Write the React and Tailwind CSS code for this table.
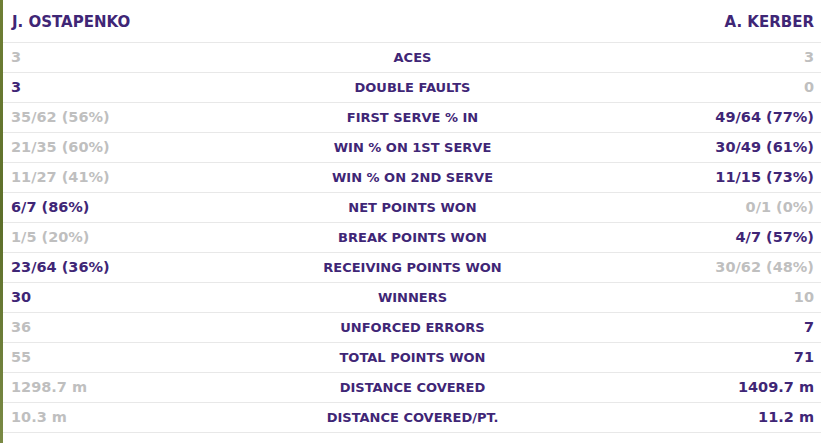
import React from "react";

const rows = [
  ["3", "ACES", "3", false, false],
  ["3", "DOUBLE FAULTS", "0", true, false],
  ["35/62 (56%)", "FIRST SERVE % IN", "49/64 (77%)", false, true],
  ["21/35 (60%)", "WIN % ON 1ST SERVE", "30/49 (61%)", false, true],
  ["11/27 (41%)", "WIN % ON 2ND SERVE", "11/15 (73%)", false, true],
  ["6/7 (86%)", "NET POINTS WON", "0/1 (0%)", true, false],
  ["1/5 (20%)", "BREAK POINTS WON", "4/7 (57%)", false, true],
  ["23/64 (36%)", "RECEIVING POINTS WON", "30/62 (48%)", true, false],
  ["30", "WINNERS", "10", true, false],
  ["36", "UNFORCED ERRORS", "7", false, true],
  ["55", "TOTAL POINTS WON", "71", false, true],
  ["1298.7 m", "DISTANCE COVERED", "1409.7 m", false, true],
  ["10.3 m", "DISTANCE COVERED/PT.", "11.2 m", false, true],
];

export default function App() {
  return (
    <div
      className="flex w-[821px] h-[443px] bg-white overflow-hidden"
      style={{ fontFamily: "'DejaVu Sans', 'Liberation Sans', sans-serif" }}
    >
      <div className="w-[3px] h-full bg-gradient-to-b from-[#6f7f35] via-[#5d6f2a] to-[#7a8a45]" />
      <div className="flex-1 flex flex-col">
        <div className="h-[43px] flex items-center justify-between pt-[3px] pl-[9px] pr-[7px] border-b border-[#e8e8e8] text-[15px] font-bold text-[#3f2676]">
          <span>J. OSTAPENKO</span>
          <span>A. KERBER</span>
        </div>
        {rows.map(([l, m, r, lb, rb]) => (
          <div
            key={m}
            className="h-[30px] grid grid-cols-[1fr_auto_1fr] items-center pt-[1px] pl-[8px] pr-[7px] border-b border-[#e8e8e8]"
          >
            <span className={`text-[14.5px] font-bold ${lb ? "text-[#3f2676]" : "text-[#bfbfbf]"}`}>{l}</span>
            <span className="text-[13px] font-bold text-[#3f2676] text-center">{m}</span>
            <span className={`text-[14.5px] font-bold text-right ${rb ? "text-[#3f2676]" : "text-[#bfbfbf]"}`}>{r}</span>
          </div>
        ))}
      </div>
    </div>
  );
}
